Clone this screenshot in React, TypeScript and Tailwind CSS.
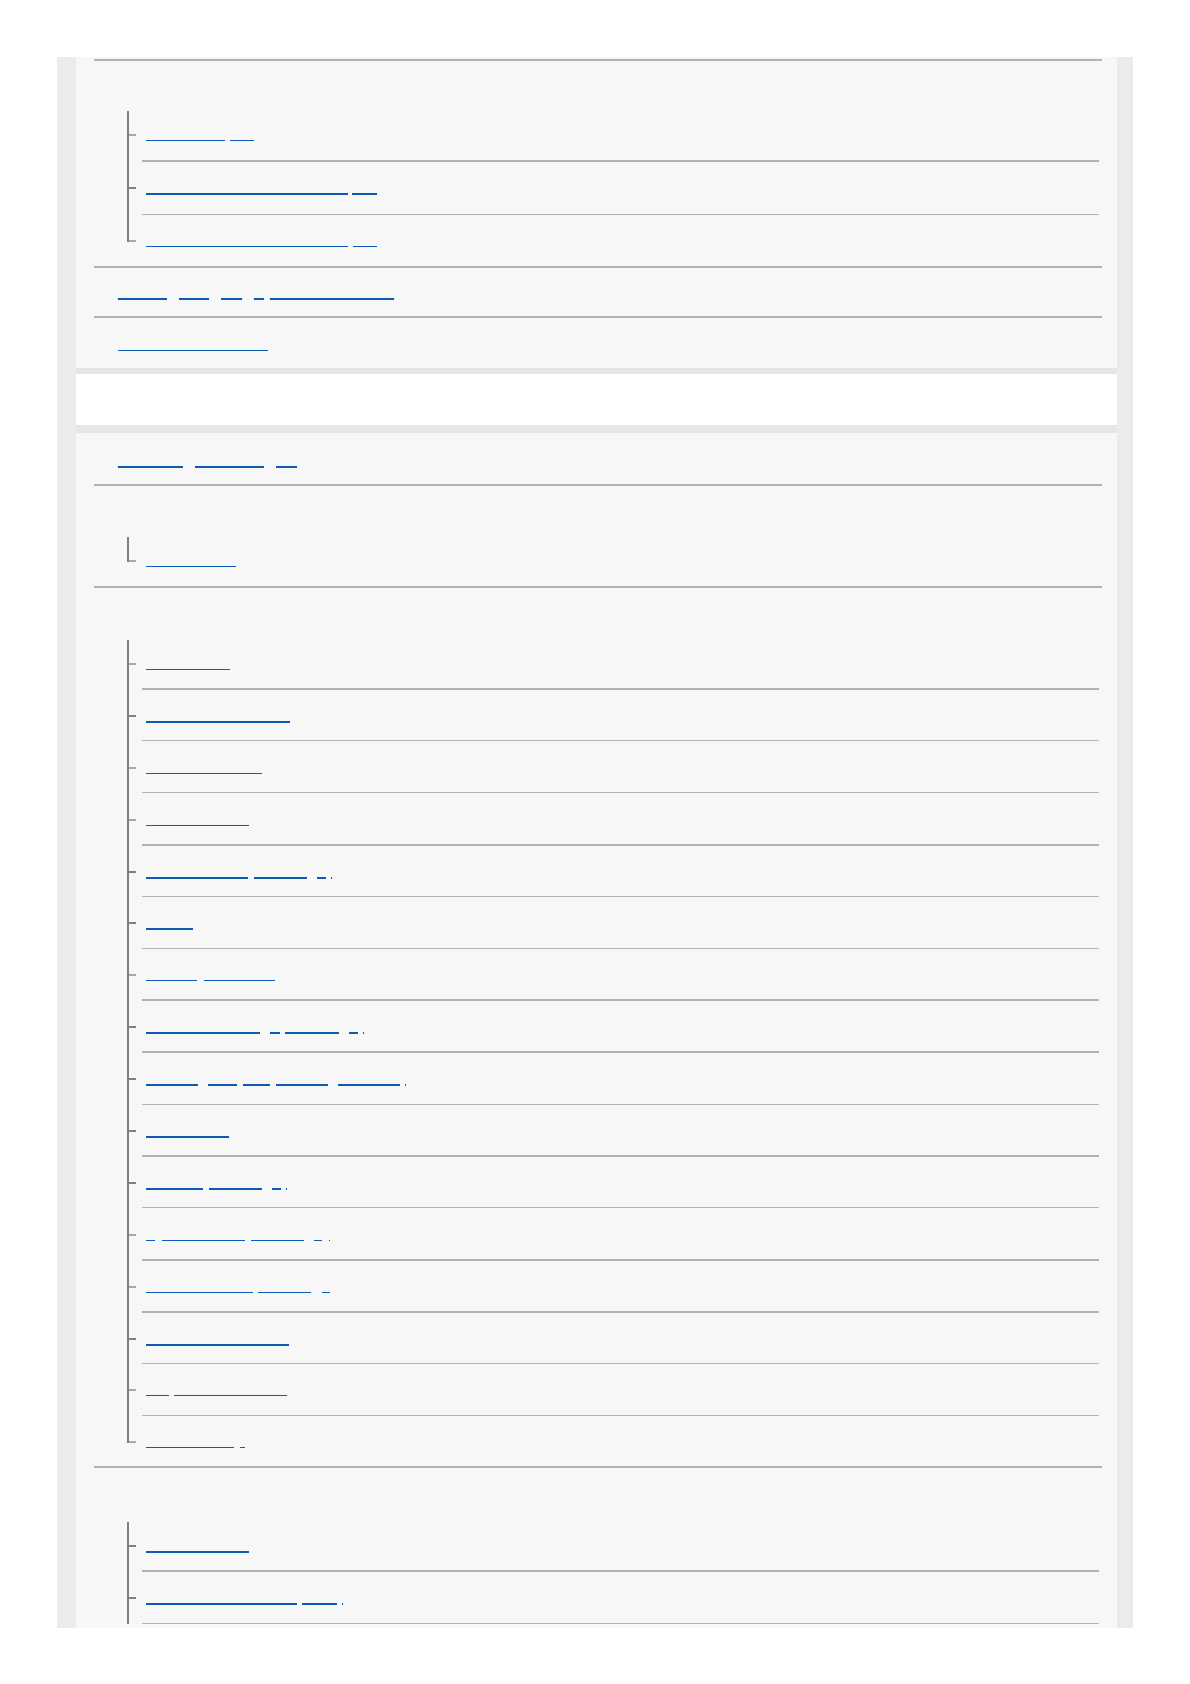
import clsx from 'clsx'

type Seg = [number, number]
type Row = { segs: Seg[]; thick?: boolean; sepThick?: boolean }

const groupA: Row[] = [
  { segs: [[146, 225], [230, 254]], sepThick: true },
  { segs: [[146, 348], [352, 377]], thick: true },
  { segs: [[146, 348], [353, 377]] },
]

const groupB: Row[] = [{ segs: [[146, 236]] }]

const groupC: Row[] = [
  { segs: [[146, 230]], sepThick: true },
  { segs: [[146, 290]], thick: true },
  { segs: [[146, 262]] },
  { segs: [[146, 249]], sepThick: true },
  { segs: [[146, 248], [254, 307], [317, 326], [331, 332]], thick: true },
  { segs: [[146, 193]], thick: true },
  { segs: [[146, 197], [204, 275]], sepThick: true },
  { segs: [[146, 260], [270, 280], [285, 339], [349, 358], [363, 364]], thick: true, sepThick: true },
  { segs: [[146, 198], [208, 237], [243, 270], [276, 328], [338, 400], [405, 406]], thick: true },
  { segs: [[146, 229]], thick: true, sepThick: true },
  { segs: [[146, 203], [209, 262], [272, 281], [286, 287]], thick: true },
  { segs: [[146, 155], [162, 245], [251, 304], [314, 322], [329, 330]], sepThick: true },
  { segs: [[146, 253], [258, 311], [322, 330]], sepThick: true },
  { segs: [[146, 289]], thick: true },
  { segs: [[146, 169], [174, 287]] },
  { segs: [[146, 234], [240, 245]] },
]

const groupD: Row[] = [
  { segs: [[146, 249]], thick: true, sepThick: true },
  { segs: [[146, 297], [302, 337], [342, 343]], thick: true },
]

function Underline({ segs, from, thick }: { segs: Seg[]; from: number; thick?: boolean }) {
  let x = from
  return (
    <div className="flex h-[2px]">
      {segs.map(([a, b], i) => {
        const ml = a - x
        x = b
        return (
          <a
            key={i}
            href="#"
            className={clsx('block shrink-0 bg-[#0b5ab4]', thick ? 'h-[2px]' : 'h-px')}
            style={{ marginLeft: ml, width: b - a }}
          />
        )
      })}
    </div>
  )
}

function Rule({ thick }: { thick?: boolean }) {
  return (
    <div className="flex h-[2px] items-center">
      <div className={clsx('w-full', thick ? 'h-[2px] bg-[#b2b2b2]' : 'h-px bg-[#b4b4b4]')} />
    </div>
  )
}

function NestedRow({ row, first, last, sep, rowClass }: { row: Row; first: boolean; last: boolean; sep: boolean; rowClass: string }) {
  return (
    <div className="flex">
      <div className="flex w-[48px] shrink-0 flex-col pl-[33px]">
        {first && <div className="h-[2px]" />}
        <div className={clsx(first ? 'h-[23px]' : 'h-[25px]', 'border-l-2 border-[#7f7f7f]')} />
        <div className={clsx('h-[2px] w-[9px] border-l-2 border-[#7f7f7f]', row.thick ? 'bg-[#808080]' : 'bg-[#a9a9a9]')} />
        {!last && <div className="flex-1 border-l-2 border-[#7f7f7f]" />}
      </div>
      <div className="flex flex-1 flex-col pr-[3px]">
        <div className={clsx('pl-[4px] pt-[31px]', rowClass)}>
          <Underline segs={row.segs} from={146} thick={row.thick} />
        </div>
        {sep && <Rule thick={row.sepThick} />}
      </div>
    </div>
  )
}

function Group({ rows, padClass, rowClass, open }: { rows: Row[]; padClass: string; rowClass: string; open?: boolean }) {
  return (
    <div className={padClass}>
      {rows.map((r, i) => {
        const isLast = i === rows.length - 1
        return (
          <NestedRow
            key={i}
            row={r}
            first={i === 0}
            last={isLast && !open}
            sep={!isLast || !!open}
            rowClass={rowClass}
          />
        )
      })}
    </div>
  )
}

function TopRow({ segs, thick, className }: { segs: Seg[]; thick?: boolean; className: string }) {
  return (
    <div className={clsx('pl-[24px]', className)}>
      <Underline segs={segs} from={118} thick={thick} />
    </div>
  )
}

export default function App() {
  return (
    <div className="min-h-[1684px] bg-white pt-[57px] font-['Liberation_Sans',sans-serif]">
      <div className="ml-[57px] w-[1076px] bg-[#ebebeb] pl-[19px] pr-[16px]">
        <section className="h-[311px] overflow-hidden bg-[#f7f7f7] pl-[18px] pr-[15px]">
          <div className="h-[2px]" />
          <Rule thick />
          <Group rows={groupA} padClass="pt-[48px]" rowClass="h-[51px]" />
          <Rule thick />
          <TopRow
            segs={[[118, 167], [179, 209], [221, 242], [254, 264], [270, 394]]}
            thick
            className="h-[48px] pt-[30px]"
          />
          <Rule thick />
          <TopRow segs={[[118, 268]]} className="h-[50px] pt-[32px]" />
        </section>

        <div className="h-[6px] bg-[#e5e5e5]" />
        <div className="h-[51px] bg-white" />
        <div className="h-[8px] bg-[#e6e6e6]" />

        <section className="h-[1195px] overflow-hidden bg-[#f7f7f7] pl-[18px] pr-[15px]">
          <TopRow segs={[[118, 183], [195, 264], [276, 297]]} thick className="h-[51px] pt-[33px]" />
          <Rule thick />
          <Group rows={groupB} padClass="pt-[49px]" rowClass="h-[51px]" />
          <Rule thick />
          <Group rows={groupC} padClass="pt-[50px]" rowClass="h-[49.9px]" />
          <Rule thick />
          <Group rows={groupD} padClass="pt-[52px]" rowClass="h-[49.9px]" open />
        </section>
      </div>
    </div>
  )
}
